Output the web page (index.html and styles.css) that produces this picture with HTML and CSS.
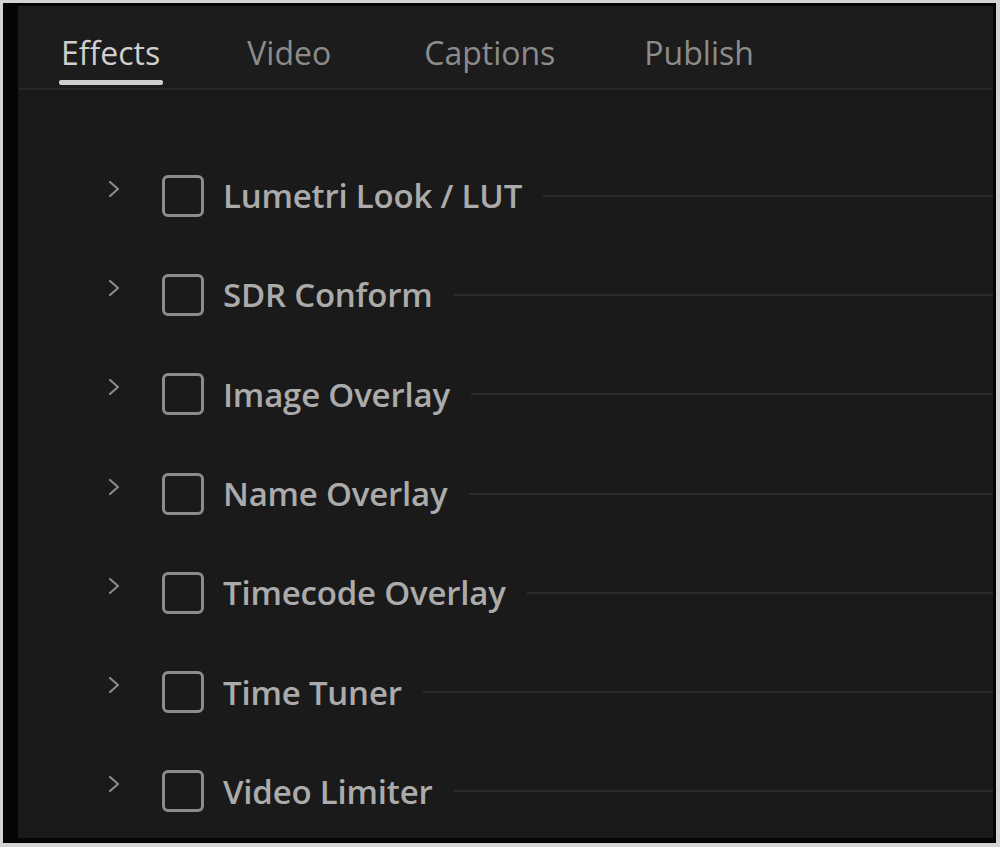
FILE: index.html
```html
<!DOCTYPE html>
<html>
<head>
<meta charset="utf-8">
<link rel="stylesheet" href="styles.css">
</head>
<body>
<div class="panel">
  <div class="tabs">
    <div class="tab active">Effects</div>
    <div class="tab t-video">Video</div>
    <div class="tab t-captions">Captions</div>
    <div class="tab t-publish">Publish</div>
  </div>
  <div class="list">
    <div class="row"><svg class="chev" viewBox="0 0 14 20"><polyline points="3,3 11,10 3,17"/></svg><span class="box"></span><span class="label">Lumetri Look / LUT</span><span class="rule"></span></div>
    <div class="row"><svg class="chev" viewBox="0 0 14 20"><polyline points="3,3 11,10 3,17"/></svg><span class="box"></span><span class="label">SDR Conform</span><span class="rule"></span></div>
    <div class="row"><svg class="chev" viewBox="0 0 14 20"><polyline points="3,3 11,10 3,17"/></svg><span class="box"></span><span class="label">Image Overlay</span><span class="rule"></span></div>
    <div class="row"><svg class="chev" viewBox="0 0 14 20"><polyline points="3,3 11,10 3,17"/></svg><span class="box"></span><span class="label">Name Overlay</span><span class="rule"></span></div>
    <div class="row"><svg class="chev" viewBox="0 0 14 20"><polyline points="3,3 11,10 3,17"/></svg><span class="box"></span><span class="label">Timecode Overlay</span><span class="rule"></span></div>
    <div class="row"><svg class="chev" viewBox="0 0 14 20"><polyline points="3,3 11,10 3,17"/></svg><span class="box"></span><span class="label">Time Tuner</span><span class="rule"></span></div>
    <div class="row"><svg class="chev" viewBox="0 0 14 20"><polyline points="3,3 11,10 3,17"/></svg><span class="box"></span><span class="label">Video Limiter</span><span class="rule"></span></div>
  </div>
</div>
</body>
</html>
```

FILE: styles.css
```css
html, body {
  margin: 0;
  padding: 0;
}
body {
  background: #d4d4d4;
  padding: 3px 4px 4px 3px;
  height: 847px;
  box-sizing: border-box;
  font-family: "Open Sans", "Noto Sans", sans-serif;
}
.panel {
  height: 100%;
  box-sizing: border-box;
  background: #1a1a1a;
  border-style: solid;
  border-color: #050505;
  border-width: 3px 3px 5px 15px;
  display: flex;
  flex-direction: column;
}
.tabs {
  height: 82px;
  flex: none;
  background: #1c1c1c;
  border-bottom: 2px solid #262626;
  display: flex;
  align-items: flex-start;
  padding-left: 43px;
}
.tab {
  font-size: 32px;
  color: #8c8c8c;
  line-height: 40px;
  padding-top: 27px;
  position: relative;
}
.tab.active {
  color: #cfcfcf;
}
.tab.active::after {
  content: "";
  position: absolute;
  left: -2px;
  right: -3px;
  top: 74px;
  height: 5px;
  border-radius: 2px;
  background: #d0d0d0;
}
.t-video { margin-left: 87px; }
.t-captions { margin-left: 93px; }
.t-publish { margin-left: 89px; }
.list {
  padding-top: 56px;
  display: flex;
  flex-direction: column;
}
.row {
  height: 99.3px;
  display: flex;
  align-items: center;
  padding-left: 89px;
}
.chev {
  width: 14px;
  height: 20px;
  margin-top: -14px;
  fill: none;
  stroke: #8a8a8a;
  stroke-width: 2.2;
  stroke-linecap: round;
  stroke-linejoin: round;
  flex: none;
}
.box {
  width: 36px;
  height: 36px;
  border: 3px solid #8c8c8c;
  border-radius: 6px;
  margin-left: 41px;
  flex: none;
}
.label {
  margin-left: 19px;
  font-size: 33px;
  font-weight: 600;
  color: #ababab;
  white-space: nowrap;
  letter-spacing: -0.2px;
}
.rule {
  flex: 1;
  height: 2px;
  background: #2b2b2b;
  margin-left: 21px;
}
```
